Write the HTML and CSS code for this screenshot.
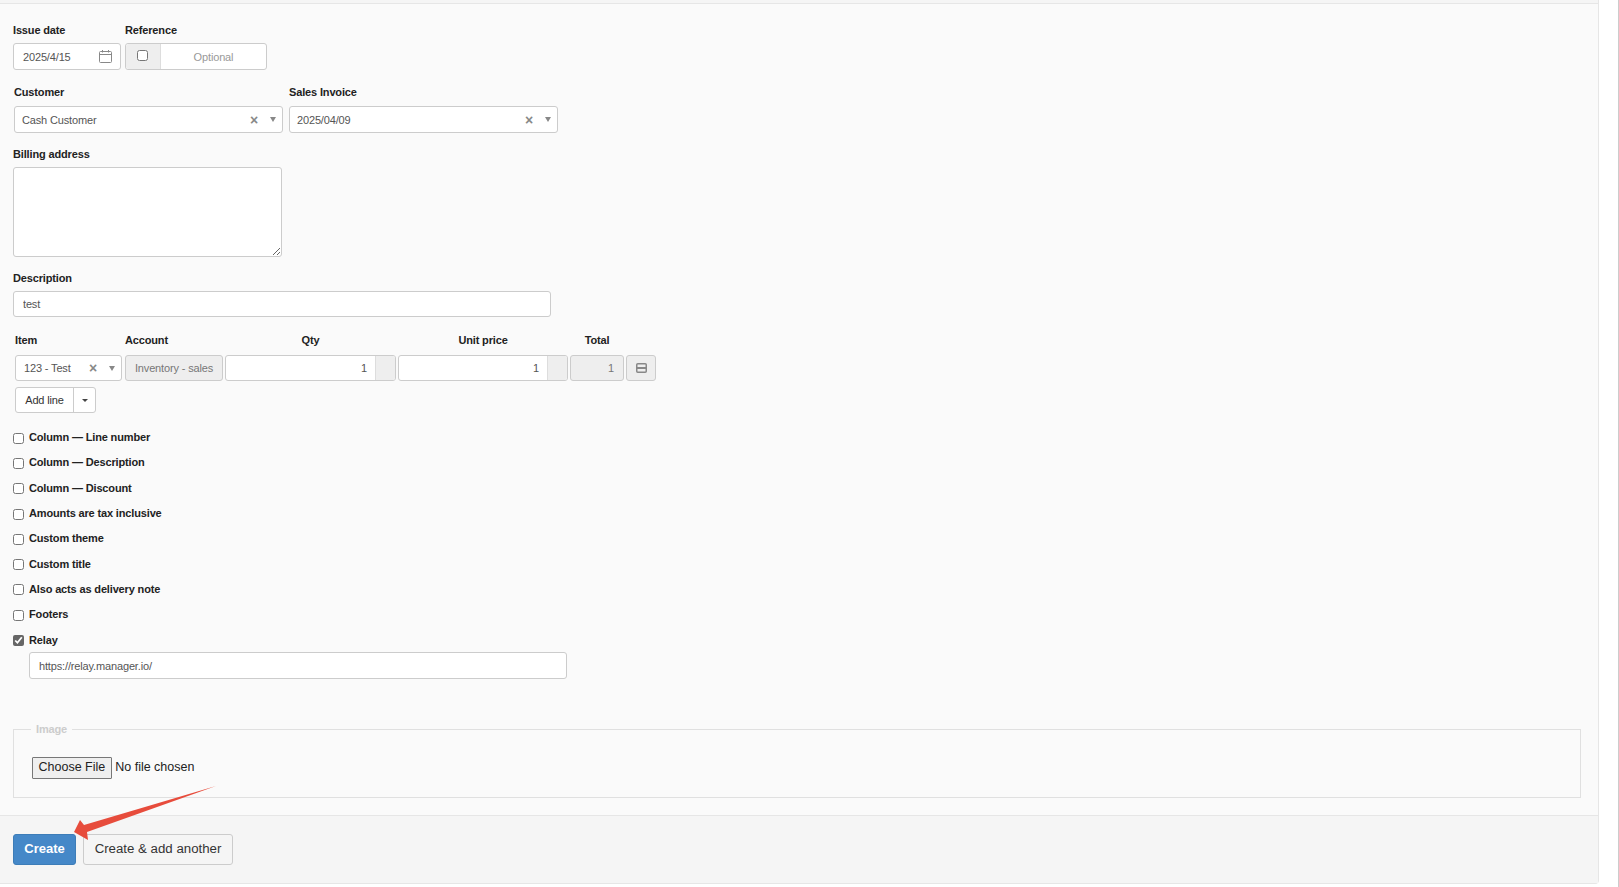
FILE: index.html
```html
<!DOCTYPE html>
<html lang="en">
<head>
  <meta charset="UTF-8">
  <meta name="viewport" content="width=device-width, initial-scale=1.0">
  <title>New Delivery Note</title>
  <link rel="stylesheet" href="styles.css">
</head>
<body>
  <div class="panel">
    <div class="panel-top"></div>
    <form class="panel-body">
      <div class="row row-date">
        <div class="field">
          <label class="field-label">Issue date</label>
          <div class="box date-box">
            <span class="date-value">2025/4/15</span>
            <svg class="calendar" width="13" height="13" viewBox="0 0 13 13" fill="none" stroke="#888" stroke-width="1">
              <rect x="0.5" y="1.5" width="12" height="11" rx="1"/>
              <path d="M0.5 4.5h12M3.5 0v2.5M9.5 0v2.5"/>
            </svg>
          </div>
        </div>
        <div class="field">
          <label class="field-label">Reference</label>
          <div class="box ref-box">
            <span class="ref-addon"><input type="checkbox" class="ref-check"></span>
            <span class="ref-input">Optional</span>
          </div>
        </div>
      </div>

      <div class="row row-customer">
        <div class="field">
          <label class="field-label">Customer</label>
          <div class="box select-box wide">
            <span class="select-value">Cash Customer</span>
            <span class="select-clear">×</span>
            <span class="select-arrow"></span>
          </div>
        </div>
        <div class="field">
          <label class="field-label">Sales Invoice</label>
          <div class="box select-box wide">
            <span class="select-value">2025/04/09</span>
            <span class="select-clear">×</span>
            <span class="select-arrow"></span>
          </div>
        </div>
      </div>

      <div class="field field-billing">
        <label class="field-label">Billing address</label>
        <textarea class="billing"></textarea>
      </div>

      <div class="field field-description">
        <label class="field-label">Description</label>
        <input type="text" class="text-input description" value="test">
      </div>

      <div class="lines">
        <div class="line-head">Item</div>
        <div class="line-head">Account</div>
        <div class="line-head center">Qty</div>
        <div class="line-head center">Unit price</div>
        <div class="line-head center">Total</div>
        <div></div>

        <div class="box select-box item-select">
          <span class="select-value">123 - Test</span>
          <span class="select-clear">×</span>
          <span class="select-arrow"></span>
        </div>
        <div class="box cell-disabled">Inventory - sales</div>
        <div class="box number-box"><span class="number-value">1</span><span class="number-addon"></span></div>
        <div class="box number-box"><span class="number-value">1</span><span class="number-addon"></span></div>
        <div class="box cell-disabled align-right">1</div>
        <div class="box cell-disabled cell-icon">
          <svg width="11" height="10" viewBox="0 0 11 10" fill="none" stroke="#888" stroke-width="1.5">
            <rect x="0.75" y="0.75" width="9.5" height="8.5" rx="1"/>
            <path d="M1 5h9" stroke-width="2"/>
          </svg>
        </div>
      </div>

      <div class="add-line">
        <span class="add-line-main">Add line</span>
        <span class="add-line-caret"></span>
      </div>

      <div class="checks">
        <label class="check-row"><input type="checkbox">Column — Line number</label>
        <label class="check-row"><input type="checkbox">Column — Description</label>
        <label class="check-row"><input type="checkbox">Column — Discount</label>
        <label class="check-row"><input type="checkbox">Amounts are tax inclusive</label>
        <label class="check-row"><input type="checkbox">Custom theme</label>
        <label class="check-row"><input type="checkbox">Custom title</label>
        <label class="check-row"><input type="checkbox">Also acts as delivery note</label>
        <label class="check-row"><input type="checkbox">Footers</label>
        <label class="check-row"><input type="checkbox" checked>Relay</label>
      </div>
      <input type="text" class="text-input relay" value="https://relay.manager.io/">

      <fieldset class="image-set">
        <legend>Image</legend>
        <input type="file" class="file-input">
      </fieldset>
    </form>

    <div class="panel-footer">
      <button type="button" class="btn btn-primary">Create</button>
      <button type="button" class="btn">Create &amp; add another</button>
    </div>
  </div>

  <!-- annotation arrow pasted over the screenshot -->
  <svg class="arrow" width="160" height="60" viewBox="0 0 160 60">
    <polygon fill="#e74c3c" points="4,46 10,34 14,39 146,0 17,46 18,54"/>
  </svg>
</body>
</html>
```

FILE: styles.css
```css
body {
  font-family: "Liberation Sans", Arial, sans-serif;
  font-size: 11px;
  letter-spacing: -0.15px;
  color: #555;
  background-color: #fff;
  margin: 0;
  height: 887px;
  box-sizing: border-box;
  border-right: 1px solid #ccc;
  overflow: hidden;
}
.panel {
  width: 1599px;
  height: 884px;
  box-sizing: border-box;
  display: flex;
  flex-direction: column;
  background-color: #fafafa;
  border-right: 1px solid #e6e6e6;
  border-bottom: 1px solid #e6e6e6;
  border-bottom-right-radius: 4px;
}
.panel-top {
  height: 3px;
  background-color: #f5f5f5;
  border-bottom: 1px solid #e6e6e6;
  flex: none;
}
.panel-body {
  flex: 1;
  padding: 19px 17px 0 13px;
}
.panel-footer {
  height: 68px;
  box-sizing: border-box;
  flex: none;
  padding-top: 18px;
  padding-left: 13px;
  display: flex;
  gap: 7px;
  align-items: flex-start;
  background-color: #f5f5f5;
  border-top: 1px solid #e6e6e6;
}

.row {
  display: flex;
}
.row-date {
  gap: 4px;
}
.row-customer {
  gap: 6px;
  margin-top: 15px;
  margin-left: 1px;
}
.field-label, .line-head {
  display: block;
  font-weight: bold;
  color: #222;
  line-height: 14px;
  margin-bottom: 6px;
}
.row-customer .field-label {
  margin-bottom: 7px;
}
.center {
  text-align: center;
}

.box {
  box-sizing: border-box;
  height: 27px;
  display: flex;
  align-items: center;
  background-color: #fff;
  border: 1px solid #ccc;
  border-radius: 3px;
}
.date-box {
  width: 108px;
  padding: 0 8px 0 9px;
  justify-content: space-between;
}
.ref-box {
  width: 142px;
}
.ref-addon {
  width: 34px;
  height: 100%;
  flex: none;
  display: flex;
  justify-content: center;
  background-color: #eee;
  border-right: 1px solid #ddd;
  border-radius: 3px 0 0 3px;
}
.ref-check {
  margin: 6px 2px 0 0;
  width: 11px;
  height: 11px;
}
.ref-input {
  flex: 1;
  text-align: center;
  color: #999;
}

.select-box {
  padding: 0 6px 0 7px;
}
.item-select {
  width: 107px;
  padding-left: 8px;
}
.wide {
  width: 269px;
}
.select-value {
  flex: 1;
  white-space: nowrap;
}
.select-clear {
  font-size: 14px;
  font-weight: bold;
  color: #888;
  line-height: 14px;
  margin-right: 12px;
}
.select-arrow {
  width: 0;
  height: 0;
  border-left: 3px solid transparent;
  border-right: 3px solid transparent;
  border-top: 5px solid #888;
}

.field-billing {
  margin-top: 14px;
}
.billing {
  display: block;
  box-sizing: border-box;
  width: 269px;
  height: 90px;
  background-color: #fff;
  border: 1px solid #ccc;
  border-radius: 3px;
  margin: 0;
}
.field-description {
  margin-top: 14px;
}
.text-input {
  display: block;
  box-sizing: border-box;
  height: 26px;
  padding: 0 9px;
  font-family: inherit;
  font-size: 11px;
  letter-spacing: inherit;
  color: #555;
  background-color: #fff;
  border: 1px solid #ccc;
  border-radius: 3px;
  margin: 0;
}
.description {
  width: 538px;
}

.lines {
  display: grid;
  grid-template-columns: 108px 98px 171px 170px 54px 30px;
  column-gap: 2px;
  margin-top: 16px;
  margin-left: 2px;
}
.line-head {
  margin-bottom: 8px;
}
.lines .box {
  height: 26px;
}
.cell-disabled {
  justify-content: center;
  background-color: #eee;
  color: #777;
  white-space: nowrap;
}
.align-right {
  justify-content: flex-end;
  padding-right: 9px;
}
.number-box {
  overflow: hidden;
}
.number-value {
  flex: 1;
  text-align: right;
  padding-right: 8px;
}
.number-addon {
  width: 19px;
  height: 100%;
  flex: none;
  background-color: #eee;
  border-left: 1px solid #ddd;
}

.add-line {
  display: inline-flex;
  box-sizing: border-box;
  height: 26px;
  margin: 6px 0 0 2px;
  background-color: #fff;
  border: 1px solid #ccc;
  border-radius: 3px;
  color: #333;
  vertical-align: top;
}
.add-line-main {
  width: 57px;
  line-height: 24px;
  text-align: center;
  border-right: 1px solid #ccc;
}
.add-line-caret {
  width: 21px;
  position: relative;
}
.add-line-caret::after {
  content: "";
  position: absolute;
  left: 8px;
  top: 11px;
  border-left: 3px solid transparent;
  border-right: 3px solid transparent;
  border-top: 3px solid #444;
}

.checks {
  margin-top: 11.5px;
}
.check-row {
  display: flex;
  align-items: center;
  height: 25.3px;
  font-weight: bold;
  color: #222;
}
.check-row input {
  width: 11px;
  height: 11px;
  margin: 2px 5px 0 0;
  accent-color: #666;
}
.relay {
  width: 538px;
  height: 27px;
  margin: 0 0 0 16px;
}

.image-set {
  box-sizing: border-box;
  height: 75px;
  margin: 44px 0 0;
  padding: 22px 18px 0;
  border: 1px solid #e0e0e0;
  min-width: 0;
}
.image-set legend {
  margin-left: -1px;
  padding: 0 5px;
  font-weight: bold;
  color: #ccc;
}
.file-input {
  display: block;
  font-family: inherit;
  font-size: 12.5px;
  letter-spacing: 0;
  color: #222;
}
.file-input::file-selector-button {
  height: 22px;
  padding: 0 5.5px 3px;
  margin-right: 3.5px;
  color: #222;
  background-color: #efefef;
  border: 1px solid #777;
  border-radius: 1px;
}

.btn {
  box-sizing: border-box;
  height: 31px;
  width: 150px;
  padding: 0 0 2px;
  font-family: inherit;
  font-size: 13.25px;
  color: #333;
  background-color: #f5f5f5;
  border: 1px solid #ccc;
  border-radius: 3px;
}
.btn-primary {
  width: 63px;
  font-size: 13px;
  font-weight: bold;
  color: #fff;
  background-color: #4588c8;
  border-color: #3d7db8;
}
.arrow {
  position: absolute;
  left: 70px;
  top: 786px;
}
```
